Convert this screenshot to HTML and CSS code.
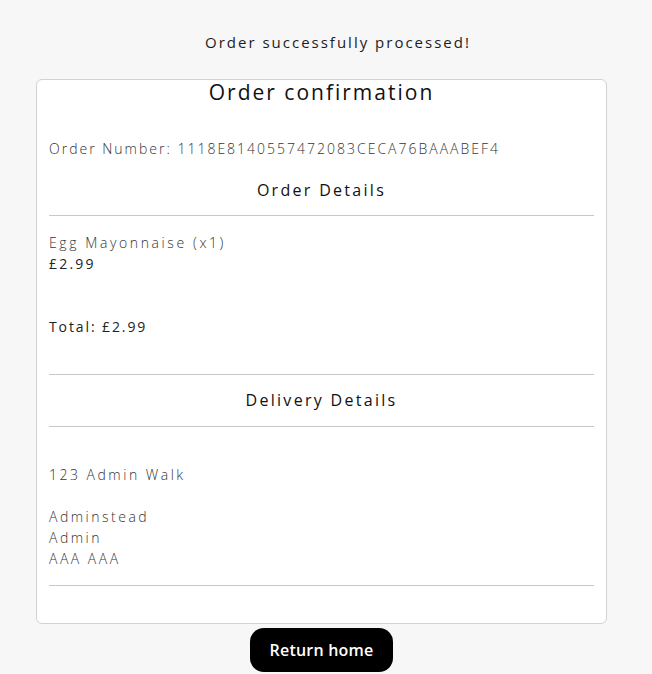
FILE: index.html
```html
<!DOCTYPE html>
<html lang="en">
<head>
<meta charset="utf-8">
<title>Order confirmation</title>
<link rel="stylesheet" href="styles.css">
</head>
<body>
<main class="page">
  <p class="status">Order successfully processed!</p>
  <section class="card">
    <h1 class="title">Order confirmation</h1>
    <p class="order-number">Order Number: 1118E8140557472083CECA76BAAABEF4</p>
    <h2 class="section-title">Order Details</h2>
    <hr class="rule">
    <div class="items">
      <p class="item-name">Egg Mayonnaise (x1)</p>
      <p class="item-price">£2.99</p>
    </div>
    <p class="total">Total: £2.99</p>
    <hr class="rule rule-total">
    <h2 class="section-title section-title-delivery">Delivery Details</h2>
    <hr class="rule rule-delivery">
    <div class="address">
      <p class="addr-line addr-first">123 Admin Walk</p>
      <p class="addr-line addr-gap">Adminstead</p>
      <p class="addr-line">Admin</p>
      <p class="addr-line">AAA AAA</p>
    </div>
    <hr class="rule rule-end">
  </section>
  <div class="actions">
    <button class="btn-home" type="button">Return home</button>
  </div>
</main>
</body>
</html>
```
FILE: styles.css
```css
* { box-sizing: border-box; }
html, body { margin: 0; padding: 0; }
body {
  background: #f6f7f6;
  font-family: "Open Sans", "Liberation Sans", sans-serif;
  color: #222;
  width: 652px;
  height: 674px;
  overflow: hidden;
}
.page {
  display: flex;
  flex-direction: column;
  padding-top: 31px;
}
.status {
  margin: 0 0 0 205px;
  font-size: 15px;
  line-height: 22px;
  letter-spacing: 2px;
  font-weight: 400;
  color: #1c1c24;
}
.card {
  margin: 26px 0 0 36px;
  width: 571px;
  height: 545px;
  background: #fff;
  border: 1px solid #d2d2d2;
  border-radius: 6px;
  padding: 0 12px;
  display: flex;
  flex-direction: column;
}
.title {
  margin: 0;
  text-align: center;
  font-size: 21px;
  line-height: 24px;
  font-weight: 400;
  letter-spacing: 2px;
  color: #111;
}
.order-number {
  margin: 35px 0 0;
  font-size: 14px;
  line-height: 20px;
  font-weight: 300;
  letter-spacing: 2px;
  color: #333;
}
.section-title {
  margin: 21px 0 0;
  text-align: center;
  font-size: 16px;
  line-height: 20px;
  font-weight: 400;
  letter-spacing: 2.3px;
  color: #111;
}
.rule {
  margin: 15px 0 0;
  border: 0;
  border-top: 1px solid #c8c8c8;
  height: 0;
}
.items { margin-top: 16px; }
.item-name {
  margin: 0;
  font-size: 14px;
  line-height: 21px;
  font-weight: 300;
  letter-spacing: 2.6px;
  color: #333;
}
.item-price {
  margin: 0;
  font-size: 14px;
  line-height: 21px;
  font-weight: 500;
  letter-spacing: 2.2px;
  color: #222;
}
.total {
  margin: 43px 0 0;
  font-size: 14px;
  line-height: 20px;
  font-weight: 500;
  letter-spacing: 1.9px;
  color: #222;
}
.rule-total { margin-top: 37px; }
.section-title-delivery { margin-top: 15px; }
.rule-delivery { margin-top: 16px; }
.address { margin-top: 37px; }
.addr-line {
  margin: 0;
  font-size: 14px;
  line-height: 21px;
  font-weight: 300;
  letter-spacing: 2.5px;
  color: #333;
}
.addr-gap { margin-top: 21px; }
.rule-end { margin-top: 16px; }
.actions {
  display: flex;
  padding-left: 250px;
  margin-top: 4px;
}
.btn-home {
  width: 143px;
  height: 44px;
  border: 0;
  border-radius: 14px;
  background: #000;
  color: #fff;
  font-family: "Open Sans", "Liberation Sans", sans-serif;
  font-size: 16px;
  font-weight: 600;
  letter-spacing: 0.2px;
  cursor: pointer;
}
```
